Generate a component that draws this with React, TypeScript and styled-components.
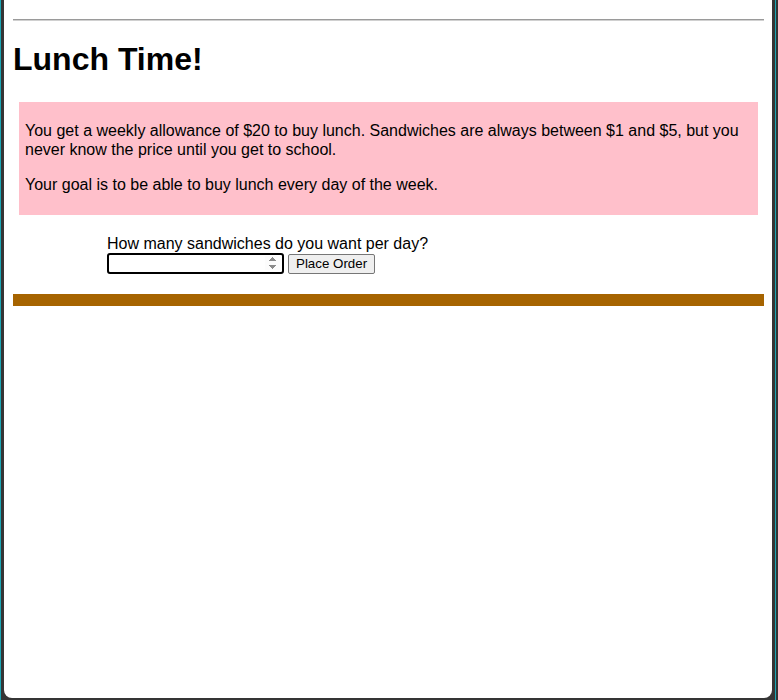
import React from "react";
import styled, { createGlobalStyle } from "styled-components";

const GlobalStyle = createGlobalStyle`
  html, body { margin: 0; padding: 0; }
  body { font-family: "Liberation Sans", Arial, sans-serif; color: #000; }
`;

const Frame = styled.div`
  box-sizing: border-box;
  height: 700px;
  display: flex;
  flex-direction: column;
  padding: 0 6px 2px 4px;
  background: linear-gradient(
    to right,
    #1aa7b5 0 1px,
    #353535 1px calc(100% - 3px),
    #1aa7b5 calc(100% - 3px) calc(100% - 2px),
    #353535 calc(100% - 2px)
  );
`;

const Window = styled.div`
  flex: 1;
  background: #fff;
  border-radius: 0 0 8px 8px;
  padding: 19px 8px 0 9px;
`;

const Rule = styled.hr`
  margin: 0;
  height: 0;
  border: none;
  border-top: 1px solid #9a9a9a;
  border-bottom: 1px solid #d0d0d0;
`;

const Title = styled.h1`
  margin: 20px 0 0;
  font-size: 32px;
  font-weight: bold;
  line-height: normal;
`;

const InfoBox = styled.div`
  margin: 24px 6px 0;
  padding: 3px 6px 5px;
  background: #ffc0cb;
  overflow: hidden;
`;

const Para = styled.p`
  margin: 16px 0;
  font-size: 16px;
  line-height: 19px;
`;

const OrderForm = styled.form`
  margin: 20px 0 0 94px;
`;

const Question = styled.div`
  font-size: 16px;
  line-height: 18px;
`;

const Controls = styled.div`
  display: flex;
  align-items: center;
  gap: 4px;
`;

const NumberInput = styled.input`
  box-sizing: border-box;
  width: 177px;
  height: 21px;
  border: 2px solid #000;
  border-radius: 3px;
  padding: 1px 2px;
  font-size: 13px;
  font-family: "Liberation Sans", Arial, sans-serif;
  outline: none;
  caret-color: #000;
`;

const OrderButton = styled.button`
  box-sizing: border-box;
  height: 20px;
  padding: 1px 7px;
  font-size: 13.333px;
  font-family: "Liberation Sans", Arial, sans-serif;
  color: #000;
  background: #efefef;
  border: 1px solid #767676;
  border-radius: 2px;
`;

const Bar = styled.div`
  margin-top: 20px;
  height: 12px;
  background: #a66400;
`;

export default function App() {
  return (
    <>
      <GlobalStyle />
      <Frame>
        <Window>
          <Rule />
          <Title>Lunch Time!</Title>
          <InfoBox>
            <Para>
              You get a weekly allowance of $20 to buy lunch. Sandwiches are always between $1 and $5, but you
              never know the price until you get to school.
            </Para>
            <Para>Your goal is to be able to buy lunch every day of the week.</Para>
          </InfoBox>
          <OrderForm onSubmit={(e) => e.preventDefault()}>
            <Question>How many sandwiches do you want per day?</Question>
            <Controls>
              <NumberInput type="number" autoFocus />
              <OrderButton type="submit">Place Order</OrderButton>
            </Controls>
          </OrderForm>
          <Bar />
        </Window>
      </Frame>
    </>
  );
}
